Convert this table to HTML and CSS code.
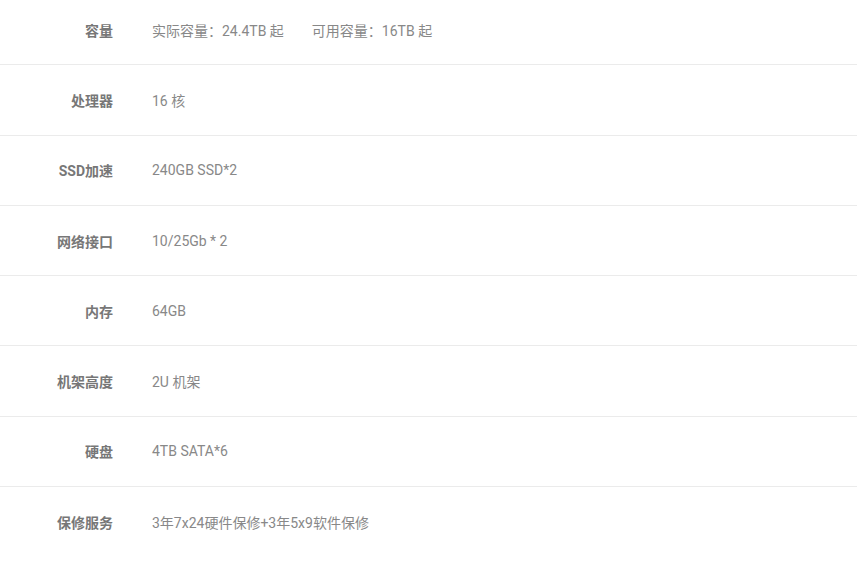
FILE: index.html
```html
<!DOCTYPE html>
<html lang="zh">
<head>
<meta charset="utf-8">
<link rel="stylesheet" href="styles.css">
</head>
<body>
<div class="specs">
  <div class="row"><div class="label">容量</div><div class="value"><span class="part">实际容量：24.4TB 起</span><span class="part">可用容量：16TB 起</span></div></div>
  <div class="row"><div class="label">处理器</div><div class="value">16 核</div></div>
  <div class="row"><div class="label">SSD加速</div><div class="value">240GB SSD*2</div></div>
  <div class="row"><div class="label">网络接口</div><div class="value">10/25Gb * 2</div></div>
  <div class="row"><div class="label">内存</div><div class="value">64GB</div></div>
  <div class="row"><div class="label">机架高度</div><div class="value">2U 机架</div></div>
  <div class="row"><div class="label">硬盘</div><div class="value">4TB SATA*6</div></div>
  <div class="row last"><div class="label">保修服务</div><div class="value">3年7x24硬件保修+3年5x9软件保修</div></div>
</div>
</body>
</html>
```
FILE: styles.css
```css
html, body {
  margin: 0;
  padding: 0;
  background: #fff;
}
body {
  font-family: Roboto, "Noto Sans CJK SC", sans-serif;
  font-size: 14px;
  color: #888;
}
.specs {
  margin-top: -5px;
}
.row {
  display: flex;
  align-items: center;
  height: 69.3px;
  border-bottom: 1px solid #ebebeb;
}
.row.last {
  border-bottom: none;
}
.label {
  width: 113px;
  flex: none;
  text-align: right;
  font-weight: bold;
  color: #777;
}
.value {
  padding-left: 39px;
  color: #888;
}
.part + .part {
  margin-left: 28px;
}
```
